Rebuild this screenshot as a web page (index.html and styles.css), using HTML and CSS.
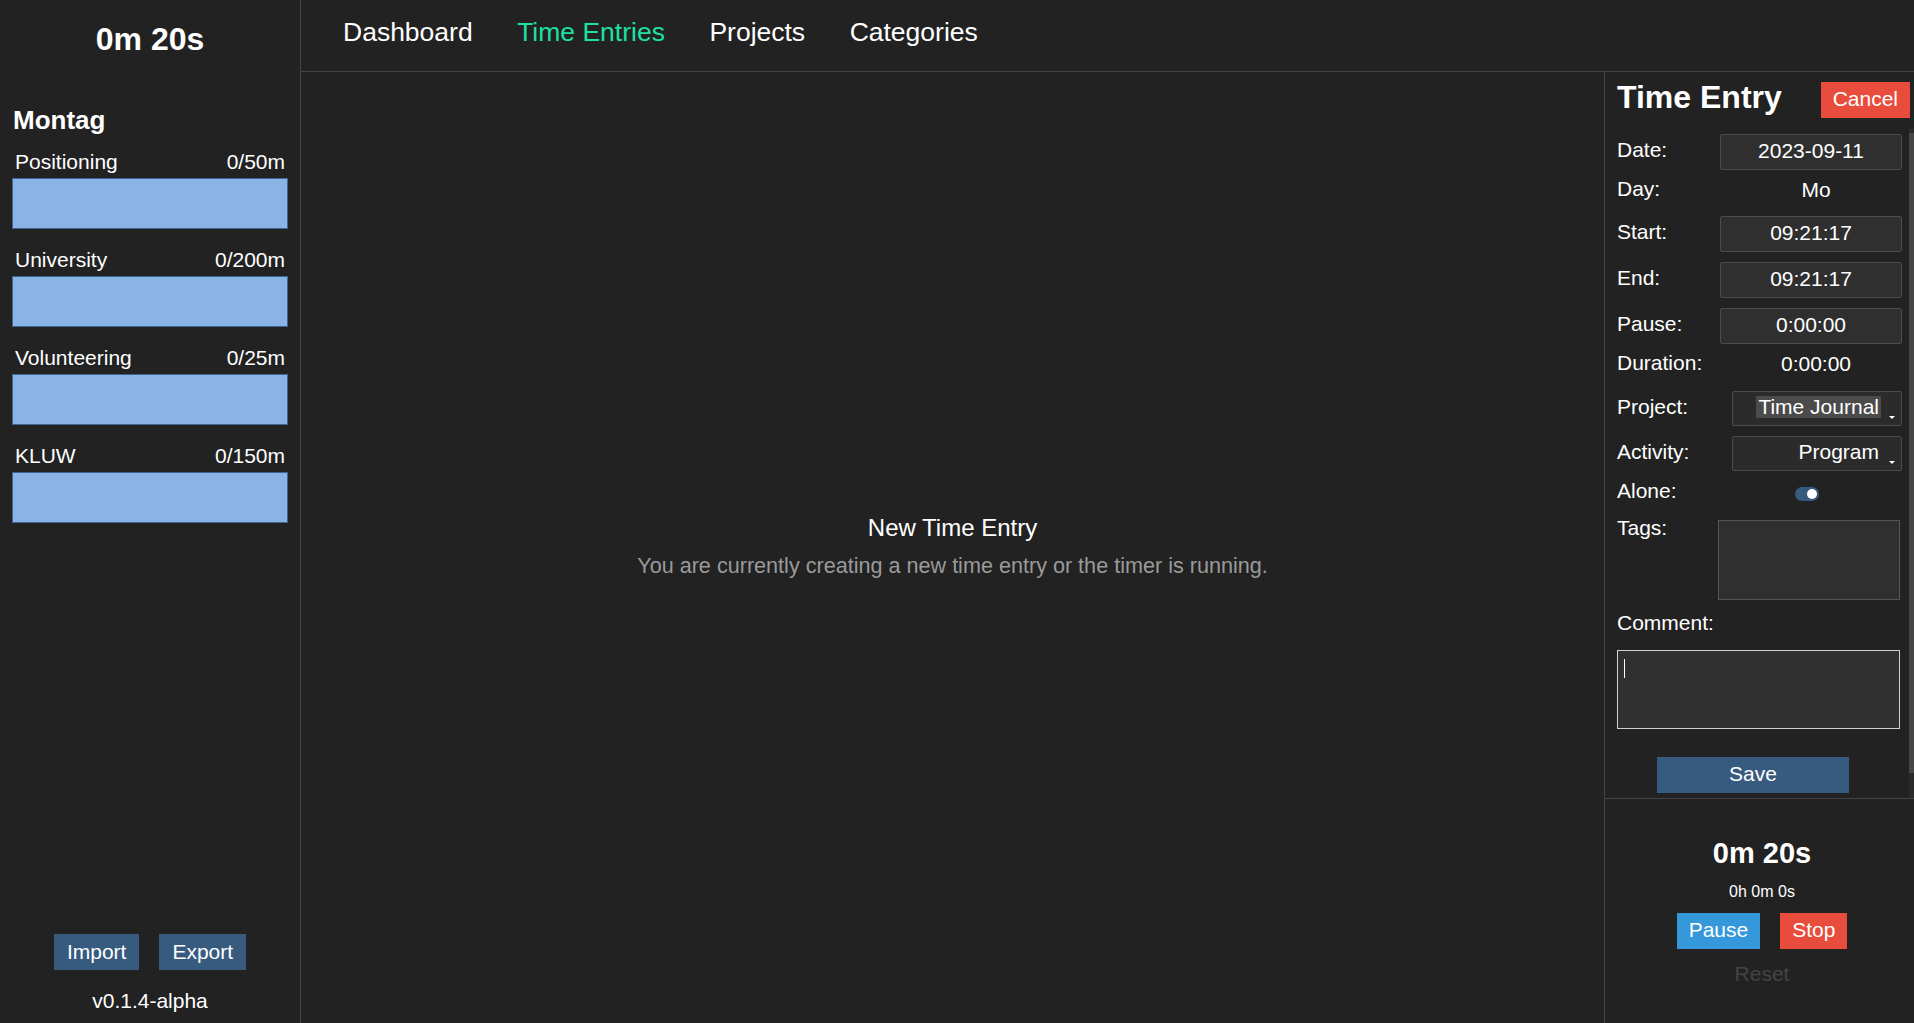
FILE: index.html
```html
<!DOCTYPE html>
<html lang="en">
<head>
<meta charset="utf-8">
<title>Time Journal</title>
<link rel="stylesheet" href="styles.css">
</head>
<body>
<div class="app">
  <aside class="sidebar">
    <div class="side-timer">0m 20s</div>
    <h2 class="day-title">Montag</h2>
    <div class="goals">
      <div class="goal">
        <div class="goal-head"><span>Positioning</span><span>0/50m</span></div>
        <div class="goal-bar"></div>
      </div>
      <div class="goal">
        <div class="goal-head"><span>University</span><span>0/200m</span></div>
        <div class="goal-bar"></div>
      </div>
      <div class="goal">
        <div class="goal-head"><span>Volunteering</span><span>0/25m</span></div>
        <div class="goal-bar"></div>
      </div>
      <div class="goal">
        <div class="goal-head"><span>KLUW</span><span>0/150m</span></div>
        <div class="goal-bar"></div>
      </div>
    </div>
    <div class="side-footer">
      <div class="io-buttons">
        <button class="btn btn-primary">Import</button>
        <button class="btn btn-primary">Export</button>
      </div>
      <div class="version">v0.1.4-alpha</div>
    </div>
  </aside>

  <div class="main">
    <nav class="topnav">
      <a class="nav-link">Dashboard</a>
      <a class="nav-link active">Time Entries</a>
      <a class="nav-link">Projects</a>
      <a class="nav-link">Categories</a>
    </nav>
    <div class="content">
      <section class="empty">
        <div class="empty-title">New Time Entry</div>
        <div class="empty-sub">You are currently creating a new time entry or the timer is running.</div>
      </section>

      <aside class="panel">
        <div class="panel-head">
          <h2 class="panel-title">Time Entry</h2>
          <button class="btn btn-danger">Cancel</button>
        </div>
        <div class="panel-body">
          <div class="entry-form">
            <div class="row">
              <span class="label">Date:</span>
              <div class="input">2023-09-11</div>
            </div>
            <div class="row row-text row-day">
              <span class="label">Day:</span>
              <div class="value">Mo</div>
            </div>
            <div class="row">
              <span class="label">Start:</span>
              <div class="input">09:21:17</div>
            </div>
            <div class="row">
              <span class="label">End:</span>
              <div class="input">09:21:17</div>
            </div>
            <div class="row">
              <span class="label">Pause:</span>
              <div class="input">0:00:00</div>
            </div>
            <div class="row row-text row-duration">
              <span class="label">Duration:</span>
              <div class="value">0:00:00</div>
            </div>
            <div class="row">
              <span class="label">Project:</span>
              <div class="select"><span class="sel-text selected">Time Journal</span><span class="caret-down"></span></div>
            </div>
            <div class="row">
              <span class="label">Activity:</span>
              <div class="select"><span class="sel-text">Program</span><span class="caret-down"></span></div>
            </div>
            <div class="row row-alone">
              <span class="label">Alone:</span>
              <div class="value value-toggle"><span class="toggle"><span class="knob"></span></span></div>
            </div>
            <div class="row row-tags">
              <span class="label label-top">Tags:</span>
              <div class="tags"></div>
            </div>
            <div class="comment-label label">Comment:</div>
            <div class="comment"><span class="text-caret"></span></div>
            <button class="btn btn-primary btn-save">Save</button>
          </div>
          <div class="scrollbar"><div class="thumb"></div></div>
        </div>
        <div class="timer">
          <div class="timer-big">0m 20s</div>
          <div class="timer-sub">0h 0m 0s</div>
          <div class="timer-buttons">
            <button class="btn btn-info">Pause</button>
            <button class="btn btn-danger">Stop</button>
          </div>
          <button class="btn btn-reset">Reset</button>
        </div>
      </aside>
    </div>
  </div>
</div>
</body>
</html>
```

FILE: styles.css
```css
* { box-sizing: border-box; }

html, body {
  margin: 0;
  padding: 0;
  height: 100%;
  background: #222222;
  color: #ffffff;
  font-family: "Liberation Sans", Arial, sans-serif;
  overflow: hidden;
}

.app {
  display: flex;
  height: 1023px;
}

/* ---------- sidebar ---------- */
.sidebar {
  width: 301px;
  flex: 0 0 301px;
  border-right: 1px solid #444444;
  padding: 0 12px;
  display: flex;
  flex-direction: column;
}

.side-timer {
  margin-top: 19px;
  font-size: 32px;
  line-height: 40px;
  font-weight: bold;
  text-align: center;
}

.day-title {
  margin: 46px 0 0 1px;
  font-size: 26px;
  line-height: 30px;
  font-weight: bold;
}

.goals {
  margin-top: 14px;
}

.goal {
  margin-bottom: 18px;
}

.goal-head {
  display: flex;
  justify-content: space-between;
  padding: 0 3px;
  font-size: 21px;
  line-height: 25px;
}

.goal-bar {
  margin-top: 4px;
  height: 51px;
  background: #8ab4e5;
  border: 1px solid #3f6591;
}

.side-footer {
  margin-top: auto;
  padding-bottom: 10px;
}

.io-buttons {
  display: flex;
  justify-content: center;
  gap: 20px;
}

.io-buttons .btn {
  padding: 0 13px;
}

.version {
  margin-top: 19px;
  text-align: center;
  font-size: 21px;
  line-height: 24px;
}

/* ---------- buttons ---------- */
.btn {
  height: 36px;
  padding: 0 12px;
  border: none;
  border-radius: 0;
  font-family: "Liberation Sans", Arial, sans-serif;
  font-size: 21px;
  line-height: 34px;
  padding-bottom: 2px;
  color: #ffffff;
  cursor: pointer;
}

.btn-primary { background: #375a7f; }
.btn-danger { background: #e74c3c; }
.btn-info { background: #3498db; }

/* ---------- main ---------- */
.main {
  flex: 1;
  display: flex;
  flex-direction: column;
  min-width: 0;
}

.topnav {
  height: 72px;
  flex: 0 0 72px;
  border-bottom: 1px solid #444444;
  padding: 16px 0 0 42px;
  display: flex;
  align-items: flex-start;
  gap: 44.5px;
}

.nav-link {
  font-size: 26.5px;
  line-height: 32px;
  color: #ffffff;
  text-decoration: none;
}

.nav-link.active {
  color: #1ee0a0;
}

.content {
  flex: 1;
  display: flex;
  min-height: 0;
}

.empty {
  flex: 1;
  display: flex;
  flex-direction: column;
  align-items: center;
  justify-content: center;
  padding-bottom: 2px;
}

.empty-title {
  font-size: 24px;
  line-height: 28px;
  color: #ffffff;
}

.empty-sub {
  margin-top: 11px;
  font-size: 21.6px;
  line-height: 26px;
  color: #9a9a9a;
}

/* ---------- right panel ---------- */
.panel {
  width: 310px;
  flex: 0 0 310px;
  border-left: 1px solid #444444;
  display: flex;
  flex-direction: column;
}

.panel-head {
  height: 56px;
  flex: 0 0 56px;
  padding: 10px 4px 0 12px;
  display: flex;
  justify-content: space-between;
  align-items: flex-start;
}

.panel-title {
  margin: 0;
  font-size: 32px;
  line-height: 30px;
  font-weight: bold;
}

.panel-head .btn {
  padding: 0 12px 2px;
}

.panel-body {
  flex: 1;
  display: flex;
  min-height: 0;
}

.entry-form {
  flex: 1;
  padding: 6px 7px 0 12px;
}

.scrollbar {
  width: 5px;
  flex: 0 0 5px;
  background: #2b2b2b;
}

.scrollbar .thumb {
  margin-top: 5px;
  height: 640px;
  background: #474747;
}

.row {
  display: flex;
  justify-content: space-between;
  align-items: center;
  margin-bottom: 10px;
}

.label {
  font-size: 21px;
  line-height: 24px;
}

.row .label {
  padding-bottom: 4px;
}

.input {
  width: 182px;
  height: 36px;
  background: #2f2f2f;
  border: 1px solid #4b4b4b;
  border-radius: 2px;
  font-size: 21px;
  line-height: 31px;
  padding-bottom: 3px;
  text-align: center;
}

.row-text {
  height: 22px;
}

.row-day { margin-bottom: 14px; }
.row-duration { margin-bottom: 15px; }

.value {
  width: 172px;
  font-size: 21px;
  line-height: 22px;
  text-align: center;
  padding-bottom: 2px;
}

.select {
  width: 170px;
  height: 35px;
  background: #2b2b2b;
  border: 1px solid #4b4b4b;
  border-radius: 2px;
  display: flex;
  justify-content: flex-end;
  align-items: center;
  padding: 0 6px 4px 0;
}

.sel-text {
  font-size: 21px;
  line-height: 22px;
  margin-right: 8px;
  padding: 0 2px;
}

.sel-text.selected {
  background: #4b4b4b;
}

.caret-down {
  align-self: flex-end;
  margin-bottom: 2px;
  width: 0;
  height: 0;
  border-left: 3px solid transparent;
  border-right: 3px solid transparent;
  border-top: 3px solid #ffffff;
}

.row-alone {
  height: 24px;
  margin-bottom: 15px;
}

.value-toggle {
  display: flex;
  justify-content: flex-start;
  padding: 2px 0 0 65px;
}

.toggle {
  width: 24px;
  height: 14px;
  border-radius: 7px;
  background: #375a7f;
  display: flex;
  align-items: center;
  justify-content: flex-end;
  padding-right: 2px;
}

.knob {
  width: 10px;
  height: 10px;
  border-radius: 50%;
  background: #ffffff;
}

.row-tags {
  align-items: flex-start;
  margin-bottom: 11px;
}

.row .label-top {
  margin-top: -4px;
  padding-bottom: 0;
}

.tags {
  width: 182px;
  height: 80px;
  margin-right: 2px;
  background: #2f2f2f;
  border: 1px solid #555555;
}

.comment-label {
  display: block;
}

.comment {
  margin-top: 15px;
  width: 283px;
  height: 79px;
  background: #303030;
  border: 1px solid #d0d0d0;
  padding: 8px 0 0 6px;
}

.text-caret {
  display: block;
  width: 1px;
  height: 19px;
  background: #ffffff;
}

.btn-save {
  display: block;
  margin: 28px 0 0 40px;
  width: 192px;
}

/* ---------- timer ---------- */
.timer {
  height: 225px;
  flex: 0 0 225px;
  border-top: 1px solid #444444;
  display: flex;
  flex-direction: column;
  align-items: center;
  padding: 37px 0 0 5px;
}

.timer-big {
  font-size: 29px;
  line-height: 34px;
  font-weight: bold;
}

.timer-sub {
  margin-top: 12px;
  font-size: 16px;
  line-height: 20px;
}

.timer-buttons {
  margin-top: 11px;
  display: flex;
  gap: 20px;
}

.btn-reset {
  margin-top: 8px;
  background: transparent;
  color: #444444;
}
```
